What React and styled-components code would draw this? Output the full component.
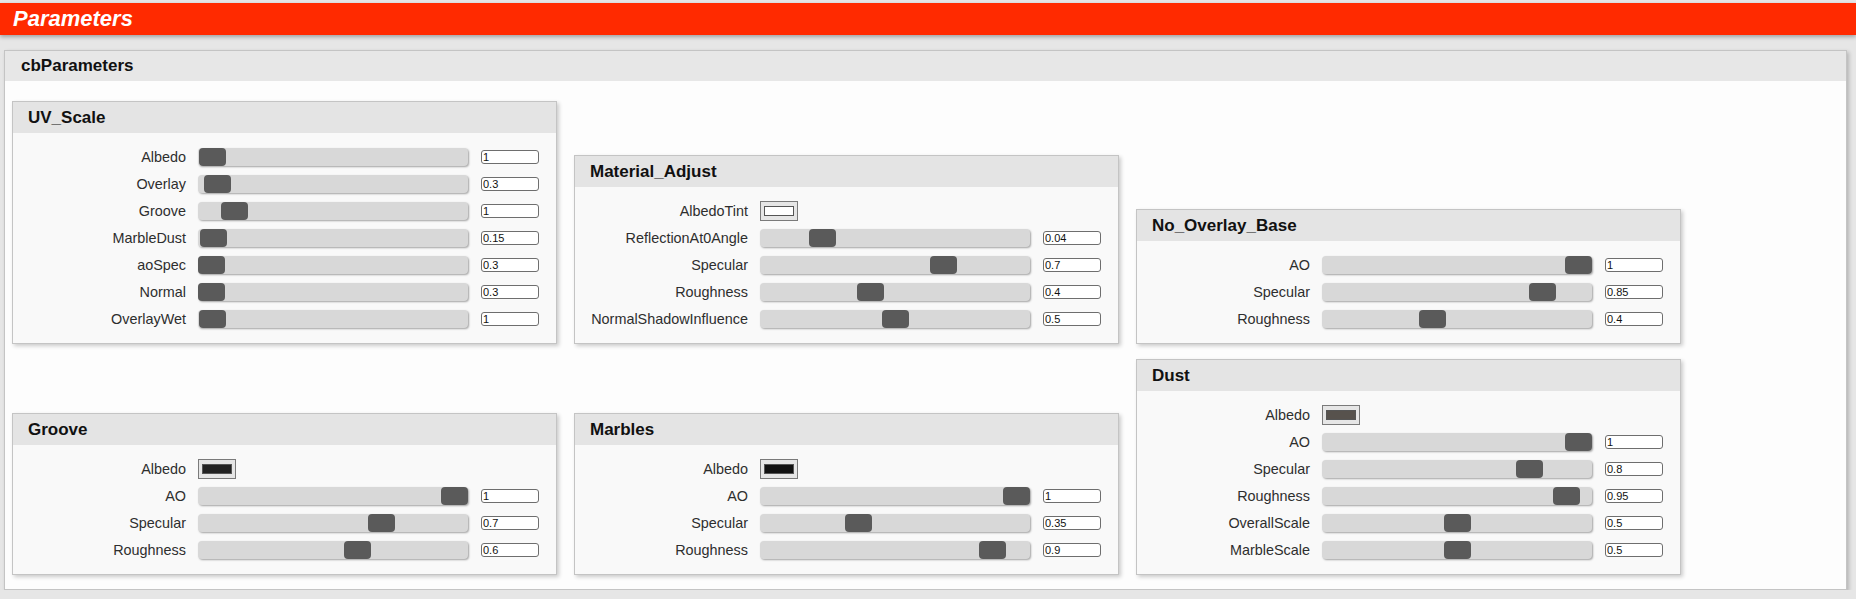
import React from 'react';
import styled, {createGlobalStyle} from 'styled-components';

const GlobalStyle = createGlobalStyle`
  body {
    margin: 0;
    background: #e6e6e6;
    font-family: "Liberation Sans", Arial, sans-serif;
    color: #2b2b2b;
  }
`;

const TitleBar = styled.div`
  margin-top: 3px;
  height: 32px;
  background: #ff2a00;
  box-shadow: 0 2px 4px rgba(0, 0, 0, 0.3);
  display: flex;
  align-items: center;
  padding-left: 13px;
`;
const Title = styled.h1`
  margin: 0;
  font-size: 22px;
  font-weight: bold;
  font-style: italic;
  color: #fff;
`;

const OuterPanel = styled.div`
  margin: 15px 9px 0 4px;
  border: 1px solid #c4c4c4;
  background: #fdfdfd;
  box-shadow: 2px 2px 4px rgba(0, 0, 0, 0.22);
`;
const OuterHeader = styled.div`
  height: 30px;
  background: #e7e7e7;
  padding-left: 16px;
  display: flex;
  align-items: center;
  font-size: 17px;
  font-weight: bold;
  color: #111;
`;
const Groups = styled.div`
  display: flex;
  flex-wrap: wrap;
  align-items: flex-end;
  gap: 15px 17px;
  padding: 20px 0 14px 7px;
`;

const Panel = styled.div`
  width: 545px;
  box-sizing: border-box;
  border: 1px solid #c4c4c4;
  background: #f9f9f9;
  box-shadow: 2px 2px 4px rgba(0, 0, 0, 0.2);
`;
const PanelHeader = styled.div`
  height: 31px;
  background: #e4e4e4;
  padding-left: 15px;
  display: flex;
  align-items: center;
  font-size: 17px;
  font-weight: bold;
  color: #111;
`;
const PanelBody = styled.div`
  display: grid;
  grid-template-columns: 157px 270px 59px;
  grid-auto-rows: 27px;
  column-gap: 12px;
  align-items: center;
  padding: 10px 0 11px 16px;
`;

const Label = styled.div`
  text-align: right;
  font-size: 14.4px;
  color: #2e2e2e;
  white-space: nowrap;
`;
const Track = styled.div`
  position: relative;
  height: 18px;
  background: #d8d8d8;
  border-radius: 4px;
  box-shadow: 1px 1px 2px rgba(0, 0, 0, 0.35);
`;
const Thumb = styled.div`
  position: absolute;
  top: 0;
  width: 27px;
  height: 18px;
  background: #5a5a5a;
  border-radius: 4px;
`;
const ValueBox = styled.input`
  justify-self: end;
  width: 58px;
  height: 14px;
  box-sizing: border-box;
  border: 1px solid #6e6e6e;
  border-radius: 3px;
  background: #fff;
  padding: 0 1px;
  font-family: "Liberation Sans", Arial, sans-serif;
  font-size: 11px;
  color: #111;
  outline: none;
`;
const ColorButton = styled.div`
  justify-self: start;
  grid-column: 2 / 4;
  width: 38px;
  height: 20px;
  box-sizing: border-box;
  border: 1px solid #7a7a7a;
  background: #e6e6e6;
  padding: 4px 3px;
  display: flex;
`;
const ColorChip = styled.div`
  flex: 1;
  border: 1px solid #555;
  background: ${(p) => p.color};
`;

const s = (label, value, pos) => ({type: 'slider', label, value, pos});
const c = (label, color) => ({type: 'color', label, color});

const groups = [
  {name: 'UV_Scale', rows: [
    s('Albedo', '1', 1 / 243),
    s('Overlay', '0.3', 6 / 243),
    s('Groove', '1', 23 / 243),
    s('MarbleDust', '0.15', 2 / 243),
    s('aoSpec', '0.3', 0),
    s('Normal', '0.3', 0),
    s('OverlayWet', '1', 1 / 243),
  ]},
  {name: 'Material_Adjust', rows: [
    c('AlbedoTint', '#ffffff'),
    s('ReflectionAt0Angle', '0.04', 0.2),
    s('Specular', '0.7', 0.7),
    s('Roughness', '0.4', 0.4),
    s('NormalShadowInfluence', '0.5', 0.5),
  ]},
  {name: 'No_Overlay_Base', rows: [
    s('AO', '1', 1),
    s('Specular', '0.85', 0.85),
    s('Roughness', '0.4', 0.4),
  ]},
  {name: 'Groove', rows: [
    c('Albedo', '#222222'),
    s('AO', '1', 1),
    s('Specular', '0.7', 0.7),
    s('Roughness', '0.6', 0.6),
  ]},
  {name: 'Marbles', rows: [
    c('Albedo', '#111111'),
    s('AO', '1', 1),
    s('Specular', '0.35', 0.35),
    s('Roughness', '0.9', 0.9),
  ]},
  {name: 'Dust', rows: [
    c('Albedo', '#57524d'),
    s('AO', '1', 1),
    s('Specular', '0.8', 0.8),
    s('Roughness', '0.95', 0.95),
    s('OverallScale', '0.5', 0.5),
    s('MarbleScale', '0.5', 0.5),
  ]},
];

const Row = ({row}) => (
  <>
    <Label>{row.label}</Label>
    {row.type === 'color'
      ? <ColorButton><ColorChip color={row.color} /></ColorButton>
      : <>
          <Track>
            <Thumb style={{left: Math.round(row.pos * 243) + 'px'}} />
          </Track>
          <ValueBox readOnly value={row.value} />
        </>
    }
  </>
);

const App = () => (
  <>
    <GlobalStyle />
    <TitleBar>
      <Title>Parameters</Title>
    </TitleBar>
    <OuterPanel>
      <OuterHeader>cbParameters</OuterHeader>
      <Groups>
        {groups.map((group) =>
          <Panel key={group.name}>
            <PanelHeader>{group.name}</PanelHeader>
            <PanelBody>
              {group.rows.map((row, i) =>
                <Row key={group.name + i} row={row} />
              )}
            </PanelBody>
          </Panel>
        )}
      </Groups>
    </OuterPanel>
  </>
);

export default App;
